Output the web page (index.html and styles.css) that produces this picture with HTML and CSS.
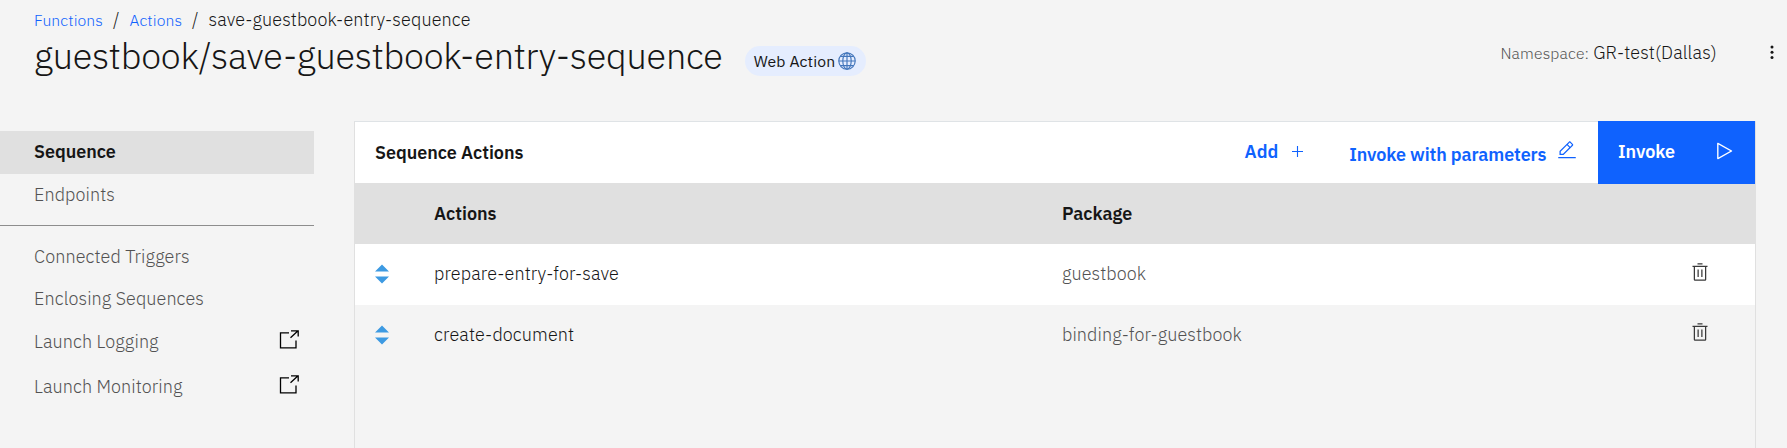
FILE: index.html
```html
<!DOCTYPE html>
<html lang="en">
<head>
<meta charset="utf-8">
<title>guestbook/save-guestbook-entry-sequence</title>
<link rel="stylesheet" href="styles.css">
</head>
<body>
<svg width="0" height="0" class="defs" aria-hidden="true">
  <symbol id="launch" viewBox="0 0 20 20"><path d="M10 2.8H1.5V17.8H17V10.5M11.5 7.7L18.5 1.2M12 .8H19.2V6.5" fill="none" stroke="currentColor" stroke-width="1.3"/></symbol>
  <symbol id="trash" viewBox="0 0 32 32"><path d="M12 12H14V24H12zM18 12H20V24H18zM4 6V8H6V28a2 2 0 0 0 2 2H24a2 2 0 0 0 2-2V8h2V6zM8 28V8H24V28zM12 2H20V4H12z" fill="currentColor"/></symbol>
  <symbol id="sort" viewBox="0 0 14 20"><path d="M7 0.5L14 7.5H0zM7 19.5L14 12.5H0z" fill="currentColor"/></symbol>
</svg>
<header class="page-header">
  <div>
    <nav class="breadcrumb">
      <a class="crumb" href="#">Functions</a><span class="sep">/</span><a class="crumb" href="#">Actions</a><span class="sep">/</span><span class="current">save-guestbook-entry-sequence</span>
    </nav>
    <div class="title-row">
      <h1 class="title">guestbook/save-guestbook-entry-sequence</h1>
      <span class="badge">Web Action
        <svg class="globe" viewBox="0 0 18 18" fill="none" stroke="currentColor" stroke-width="1.15"><circle cx="9" cy="9" r="8.2"/><ellipse cx="9" cy="9" rx="4.2" ry="8.2"/><path d="M9 .8V17.2M.8 9H17.2M2.4 4.4H15.6M2.4 13.6H15.6"/></svg>
      </span>
    </div>
  </div>
  <div class="namespace">
    <span class="ns-label">Namespace:</span>
    <span class="ns-value">GR-test(Dallas)</span>
    <svg class="more" viewBox="0 0 4 14"><circle cx="2" cy="2" r="1.5"/><circle cx="2" cy="7.2" r="1.5"/><circle cx="2" cy="12.4" r="1.5"/></svg>
  </div>
</header>
<div class="layout">
  <nav class="sidebar">
    <a class="nav-item selected" href="#">Sequence</a>
    <a class="nav-item" href="#">Endpoints</a>
    <div class="divider"></div>
    <a class="nav-item" href="#">Connected Triggers</a>
    <a class="nav-item" href="#">Enclosing Sequences</a>
    <a class="nav-item tall" href="#">Launch Logging<svg class="launch"><use href="#launch"/></svg></a>
    <a class="nav-item tall" href="#">Launch Monitoring<svg class="launch"><use href="#launch"/></svg></a>
  </nav>
  <main class="panel">
    <div class="toolbar">
      <h2 class="toolbar-title">Sequence Actions</h2>
      <button class="link-btn add">Add<svg class="plus" viewBox="0 0 11 11"><path d="M5.5 0V11M0 5.5H11" stroke="currentColor" stroke-width="1.1"/></svg></button>
      <button class="link-btn params">Invoke with parameters<svg class="edit" viewBox="0 0 32 32"><path fill="currentColor" d="M2 27H30V29H2zM25.4 9c.8-.8.8-2 0-2.8l-3.6-3.6c-.8-.8-2-.8-2.8 0l-15 15V24h6.4L25.4 9zM20.4 4L24 7.6l-3 3L17.4 7 20.4 4zM6 22v-3.6l10-10 3.6 3.6-10 10H6z"/></svg></button>
      <button class="invoke"><span>Invoke</span><svg class="play" viewBox="0 0 32 32"><path fill="currentColor" d="M7 28a1 1 0 0 1-1-1V5a1 1 0 0 1 1.482-.876l20 11a1 1 0 0 1 0 1.752l-20 11A1 1 0 0 1 7 28ZM8 6.69V25.31L24.925 16Z"/></svg></button>
    </div>
    <div class="row head"><span></span><span>Actions</span><span>Package</span></div>
    <div class="row white">
      <svg class="sort"><use href="#sort"/></svg><span>prepare-entry-for-save</span><span class="package">guestbook</span><svg class="trash"><use href="#trash"/></svg>
    </div>
    <div class="row">
      <svg class="sort"><use href="#sort"/></svg><span>create-document</span><span class="package">binding-for-guestbook</span><svg class="trash"><use href="#trash"/></svg>
    </div>
  </main>
</div>
</body>
</html>
```
FILE: styles.css
```css
* { box-sizing: border-box; }
body {
  margin: 0;
  height: 448px;
  overflow: hidden;
  display: flex;
  flex-direction: column;
  background: #f4f4f4;
  color: #161616;
  font: 300 18px/24px "IBM Plex Sans", Roboto, sans-serif;
  letter-spacing: .08px;
}
svg { display: block; flex: none; }
.defs { display: none; }
a { color: inherit; text-decoration: none; }
h1, h2 { margin: 0; font-weight: inherit; }
button { border: 0; background: none; margin: 0; padding: 0; font: inherit; font-weight: 600; letter-spacing: -.03px; text-align: left; }

.page-header { display: flex; justify-content: space-between; height: 121px; padding: 8px 13px 0 34px; }
.breadcrumb { display: flex; white-space: pre; }
.crumb { color: #0f62fe; font-size: 15.75px; letter-spacing: .1px; }
.current { letter-spacing: .11px; }
.sep { width: 26.5px; text-align: center; }
.title-row { display: flex; align-items: flex-start; gap: 22px; padding-top: 1px; }
.title { font-size: 36px; line-height: 45px; letter-spacing: -.21px; white-space: nowrap; }
.badge {
  display: flex; align-items: center; gap: 3px;
  height: 30px; margin-top: 13px; padding: 0 10px 1px 9px;
  border-radius: 15px; background: #e5edfe;
  font-size: 15.75px; font-weight: 400; letter-spacing: .1px; white-space: nowrap;
}
.globe { width: 18px; height: 18px; color: #4376bb; }
.namespace { display: flex; align-items: baseline; padding-top: 33px; white-space: nowrap; }
.ns-label { color: #525252; font-size: 15.75px; letter-spacing: .15px; margin-right: 4px; }
.ns-value { letter-spacing: .13px; }
.more { width: 4px; height: 14px; margin-left: 53px; fill: #161616; }

.layout { display: flex; flex: 1; min-height: 0; }
.sidebar { width: 314px; padding-top: 10px; }
.nav-item { display: flex; align-items: center; height: 42px; padding-left: 34px; color: #525252; }
.nav-item.selected { height: 43px; padding-bottom: 1px; background: #e0e0e0; color: #161616; font-weight: 600; letter-spacing: -.05px; }
.nav-item.tall { height: 45px; padding: 0 15px 2px 34px; justify-content: space-between; }
.launch { width: 20px; height: 20px; margin-top: -3px; }
.nav-item .launch { color: #000; }
.divider { height: 1px; margin: 9px 0 10px; background: #8d8d8d; }

.panel { width: 1402px; margin-left: 40px; border: 1px solid #e0e0e0; border-top-color: #dfe3e6; border-bottom: 0; }
.toolbar { display: flex; align-items: center; height: 61px; padding-left: 20px; background: #fff; }
.toolbar-title { flex: 1; font-size: 18px; font-weight: 600; letter-spacing: -.05px; }
.link-btn { display: flex; align-items: center; color: #0f62fe; }
.add { gap: 14px; margin: 0 46px 2px 0; }
.plus { width: 11px; height: 11px; }
.params { gap: 10px; margin: 4px 21.5px 0 0; letter-spacing: -.09px; }
.edit { width: 20px; height: 20px; margin-top: -10px; }
.invoke {
  display: flex; align-items: center; justify-content: space-between; align-self: flex-start;
  width: 157px; height: 63px; margin: -1px 0 -1px; padding: 0 20px 2px;
  background: #0f62fe; color: #fff;
}
.play { width: 22px; height: 22px; margin-top: -1px; }
.row { display: grid; grid-template-columns: 59px 628px 628px 1fr; align-items: center; height: 60px; padding: 0 0 1px 20px; }
.head { height: 61px; padding-bottom: 0; background: #e0e0e0; font-weight: 600; letter-spacing: -.03px; }
.white { height: 61px; background: #fff; }
.package { color: #525252; }
.sort { width: 14px; height: 20px; color: #3d9ae2; }
.trash { width: 20px; height: 20px; margin-top: -5px; color: #393939; }
```
